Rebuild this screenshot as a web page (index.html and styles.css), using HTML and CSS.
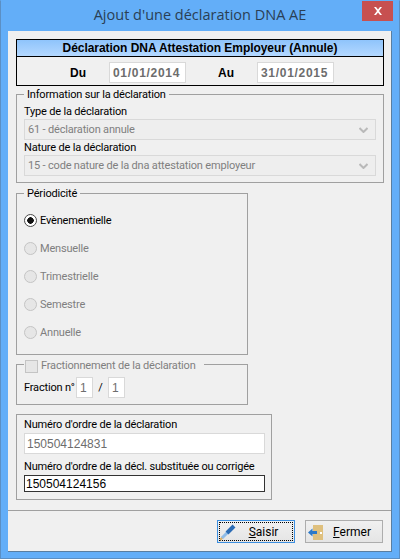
FILE: index.html
```html
<!DOCTYPE html>
<html lang="fr">
<head>
    <meta charset="UTF-8">
    <meta name="viewport" content="width=device-width, initial-scale=1.0">
    <title>Ajout d'une déclaration DNA AE</title>
    <link rel="stylesheet" href="styles.css">
</head>
<body>
    <div class="window">
        <div class="title-bar">
            <span class="title-text">Ajout d'une déclaration DNA AE</span>
            <button type="button" class="close-btn" aria-label="Fermer">
                <svg width="10" height="8" viewBox="0 0 10 8"><path d="M1 0h2l2 2.5L7 0h2L6 4l3 4H7L5 5.500 3 8H1l3-4z" fill="#fff"/></svg>
            </button>
        </div>
        <div class="client">
            <div class="content">
                <div class="banner">
                    <div class="banner-title">Déclaration DNA Attestation Employeur (Annule)</div>
                    <div class="banner-dates">
                        <span class="date-label date-du">Du</span>
                        <input class="field date-field" type="text" value="01/01/2014" disabled>
                        <span class="date-label date-au">Au</span>
                        <input class="field date-field" type="text" value="31/01/2015" disabled>
                    </div>
                </div>

                <fieldset class="group group-info">
                    <legend>Information sur la déclaration</legend>
                    <label class="field-label">Type de la déclaration</label>
                    <div class="combo">
                        <span>61 - déclaration annule</span>
                        <svg width="9" height="6" viewBox="0 0 9 6"><path d="M.5 1l4 4 4-4" fill="none" stroke="#b9b9b9" stroke-width="2"/></svg>
                    </div>
                    <label class="field-label">Nature de la déclaration</label>
                    <div class="combo">
                        <span>15 - code nature de la dna attestation employeur</span>
                        <svg width="9" height="6" viewBox="0 0 9 6"><path d="M.5 1l4 4 4-4" fill="none" stroke="#b9b9b9" stroke-width="2"/></svg>
                    </div>
                </fieldset>

                <fieldset class="group group-period">
                    <legend>Périodicité</legend>
                    <div class="radio-row"><span class="radio radio-on"></span>Evènementielle</div>
                    <div class="radio-row is-disabled"><span class="radio"></span>Mensuelle</div>
                    <div class="radio-row is-disabled"><span class="radio"></span>Trimestrielle</div>
                    <div class="radio-row is-disabled"><span class="radio"></span>Semestre</div>
                    <div class="radio-row is-disabled"><span class="radio"></span>Annuelle</div>
                </fieldset>

                <fieldset class="group group-fraction">
                    <legend class="is-disabled"><span class="check"></span>Fractionnement de la déclaration</legend>
                    <div class="fraction-row">
                        <span class="fraction-label">Fraction n°</span>
                        <input class="field fraction-field" type="text" value="1" disabled>
                        <span class="fraction-sep">/</span>
                        <input class="field fraction-field" type="text" value="1" disabled>
                    </div>
                </fieldset>

                <div class="group group-number">
                    <label class="field-label">Numéro d'ordre de la déclaration</label>
                    <input class="field number-field" type="text" value="150504124831" disabled>
                    <label class="field-label second-label">Numéro d'ordre de la décl. substituée ou corrigée</label>
                    <input class="field number-field is-active" type="text" value="150504124156">
                </div>
            </div>

            <div class="footer">
                <button type="button" class="btn btn-default">
                    <span class="btn-inner">
                        <svg class="btn-icon" width="18" height="18" viewBox="0 0 18 18">
                            <path d="M0 17l3-3" stroke="#e0b060" stroke-width="2"/>
                            <path d="M2 15l6-6" stroke="#8fbce8" stroke-width="3"/>
                            <path d="M7 10l7-7" stroke="#2b6cb5" stroke-width="4"/>
                        </svg>
                        <span class="btn-text"><u>S</u>aisir</span>
                    </span>
                </button>
                <button type="button" class="btn">
                    <span class="btn-inner">
                        <svg class="btn-icon" width="18" height="18" viewBox="0 0 18 18">
                            <rect x="5" y="2" width="10" height="15" fill="#dfc07e"/>
                            <rect x="12" y="9" width="2" height="2" fill="#fff"/>
                            <path d="M0 9.500L4.500 5.500V8H9v3H4.500v2.500z" fill="#2b78c8"/>
                        </svg>
                        <span class="btn-text"><u>F</u>ermer</span>
                    </span>
                </button>
            </div>
        </div>
    </div>
</body>
</html>
```

FILE: styles.css
```css
/* Fenetre facon Windows 8 */
* {
    box-sizing: border-box;
}
html, body {
    margin: 0;
    height: 100%;
}
body {
    font-family: Roboto, "Liberation Sans", sans-serif;
    font-size: 11px;
    letter-spacing: -.18px;
    color: #000;
    background-color: #63aef8;
}
.window {
    width: 400px;
    height: 559px;
    padding: 0 7px 7px;
    background-color: #63aef8;
    border: 1px solid #5b8fc4;
    border-top-color: #63aef8;
}
.title-bar {
    height: 30px;
    position: relative;
    text-align: center;
    line-height: 28px;
}
.title-text {
    font-family: "Open Sans", sans-serif;
    font-size: 14.5px;
    letter-spacing: 0;
    color: #2a3f55;
}
.close-btn {
    position: absolute;
    top: 0;
    right: -1px;
    width: 31px;
    height: 20px;
    border: none;
    padding: 0;
    background-color: #c75050;
    display: flex;
    align-items: center;
    justify-content: center;
}
.client {
    height: 521px;
    background-color: #f0f0f0;
    border: 1px solid #5a7ea0;
    border-width: 0 1px 1px 0;
}
.content {
    padding: 8px 7px 0 8px;
}

/* Bandeau du haut */
.banner {
    border: 1px solid #000;
    height: 47px;
}
.banner-title {
    height: 17px;
    line-height: 16px;
    text-align: center;
    font-family: "Liberation Sans", sans-serif;
    font-size: 12px;
    letter-spacing: -.05px;
    font-weight: bold;
    background: linear-gradient(#8fc4fb, #b4d8ff);
    border-bottom: 1px solid #000;
}
.banner-dates {
    display: flex;
    align-items: center;
    padding: 5px 0 0 53px;
    font-family: "Liberation Sans", sans-serif;
    font-size: 12px;
    letter-spacing: 0;
    font-weight: bold;
}
.date-du {
    width: 39px;
}
.date-au {
    margin-left: 32px;
    width: 39px;
}
.field {
    font-family: "Liberation Sans", sans-serif;
    font-size: 12px;
    font-weight: normal;
    letter-spacing: 0;
    background-color: #fff;
    border: 1px solid #d9d9d9;
    padding: 0 3px;
    margin: 0;
    outline: none;
}
.field:disabled {
    color: #6d6d6d;
    opacity: 1;
}
.date-field {
    width: 77px;
    height: 21px;
    font-weight: bold;
    letter-spacing: .7px;
}

/* Groupes */
.group {
    margin: 0;
    border: 1px solid #a0a0a0;
    min-width: 0;
}
.group legend {
    padding: 2px 3px 0;
    margin-left: 0;
    line-height: 14px;
    white-space: nowrap;
}
.group-info {
    height: 97px;
    padding: 2px 7px 0;
}
.field-label {
    display: block;
    line-height: 15px;
    white-space: nowrap;
}
.combo {
    height: 21px;
    padding: 0 7px 0 3px;
    display: flex;
    align-items: center;
    justify-content: space-between;
    color: #7f7f7f;
    background-color: #eeeeee;
    border: 1px solid #d9d9d9;
}
.group-period {
    margin-top: 2px;
    width: 232px;
    height: 170px;
    padding: 5px 7px 0;
}
.radio-row {
    height: 28px;
    display: flex;
    align-items: center;
    gap: 3px;
}
.is-disabled {
    color: #7f7f7f;
}
.radio {
    width: 13px;
    height: 13px;
    border: 1px solid #c4c4c4;
    border-radius: 50%;
    background-color: #e6e6e6;
}
.radio-on {
    border-color: #4a4a4a;
    background: radial-gradient(circle, #111 3px, #fff 3.500px);
}
.group-fraction {
    width: 232px;
    height: 50px;
    padding: 4px 7px 0;
}
.group-fraction legend {
    display: flex;
    align-items: center;
    gap: 3px;
    padding: 4px 8px 0 1px;
}
.check {
    width: 13px;
    height: 13px;
    border: 1px solid #c4c4c4;
    background-color: #e6e6e6;
}
.fraction-row {
    display: flex;
    align-items: center;
}
.fraction-label {
    width: 52px;
    white-space: nowrap;
}
.fraction-field {
    width: 17px;
    height: 21px;
    padding: 0 3px;
}
.fraction-sep {
    width: 15px;
    text-align: center;
}
.group-number {
    margin-top: 9px;
    width: 256px;
    height: 86px;
    padding: 2px 7px 0;
}
.number-field {
    display: block;
    width: 241px;
    height: 21px;
    padding: 0 2px;
    margin-top: 1px;
}
.second-label {
    margin-top: 5px;
}
.is-active {
    height: 17px;
    padding: 0 1px;
    border-color: #333;
}

/* Boutons du bas */
.footer {
    margin-top: 10px;
    padding: 9px 8px 0 0;
    border-top: 1px solid #a0a0a0;
    display: flex;
    justify-content: flex-end;
    gap: 10px;
}
.btn {
    width: 78px;
    height: 23px;
    padding: 1px;
    font: inherit;
    color: #000;
    background: linear-gradient(#f0f0f0, #e5e5e5);
    border: 1px solid #adadad;
}
.btn-default {
    border-color: #3c8fe0;
}
.btn-inner {
    display: flex;
    align-items: center;
    height: 100%;
    padding-left: 1px;
}
.btn-default .btn-inner {
    border: 1px dotted #000;
    padding-left: 0;
}
.btn-icon {
    flex: none;
}
.btn-text {
    flex: 1;
    text-align: center;
    padding-right: 3px;
    font-size: 12px;
}
```
